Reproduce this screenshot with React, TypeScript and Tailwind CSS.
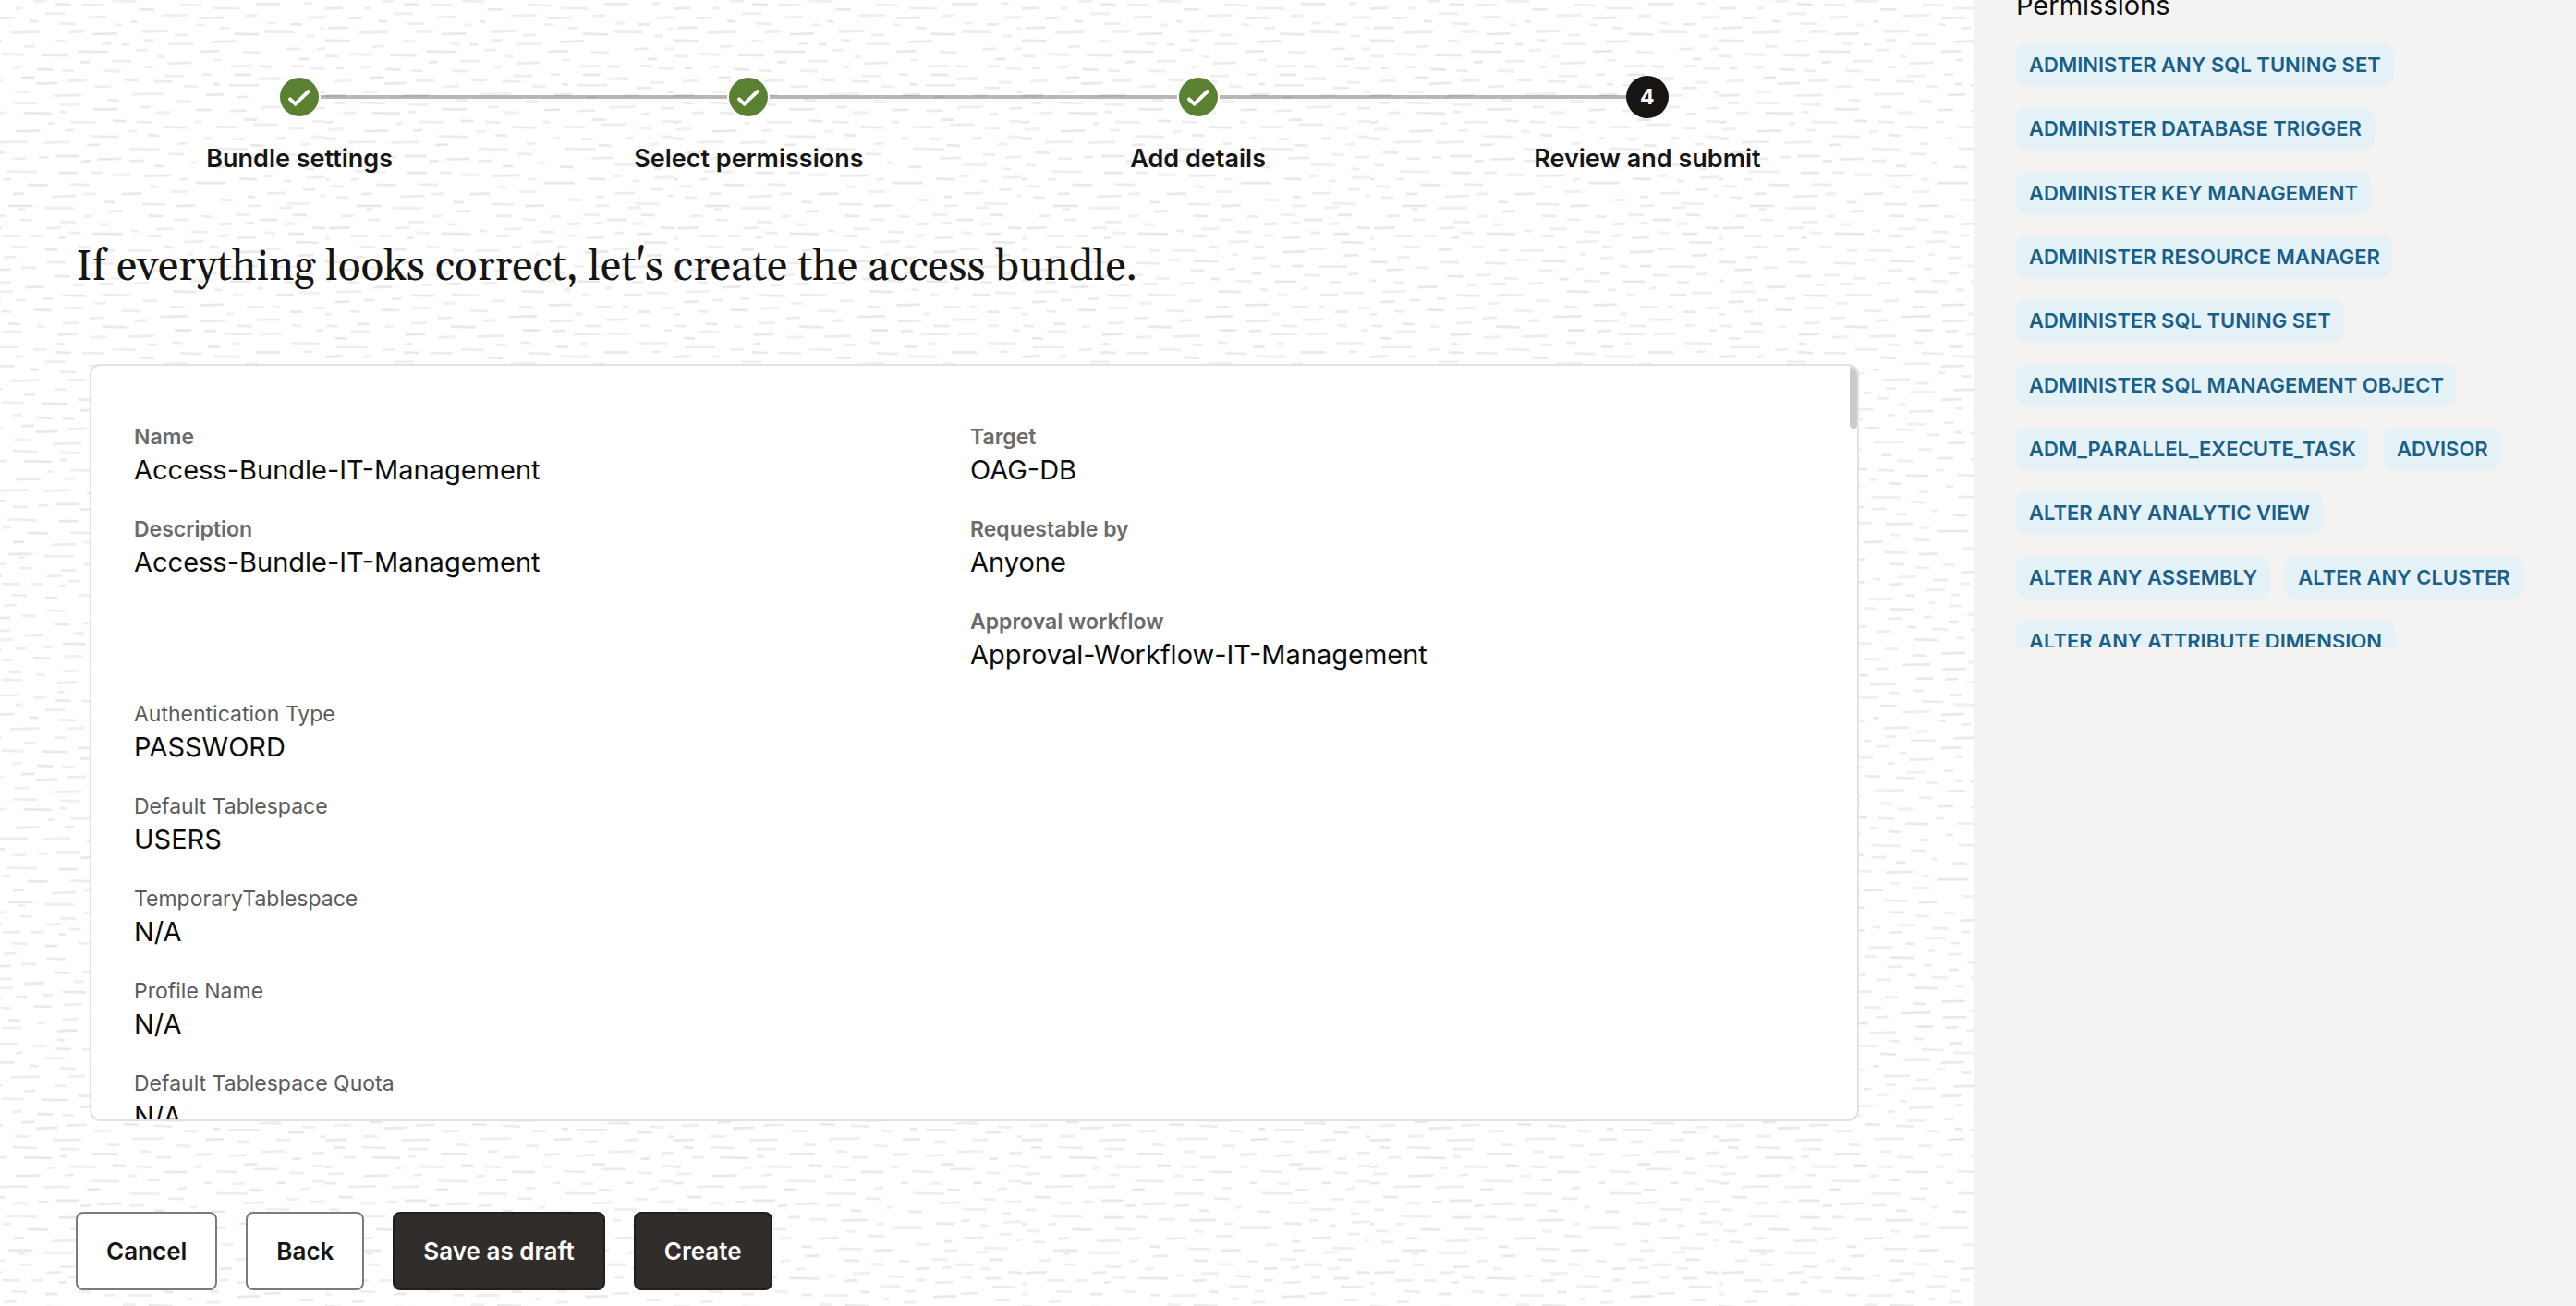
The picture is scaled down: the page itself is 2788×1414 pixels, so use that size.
import React from 'react';

const STEPS = [
  { label: 'Bundle settings', done: true },
  { label: 'Select permissions', done: true },
  { label: 'Add details', done: true },
  { label: 'Review and submit', done: false },
];

const FIELDS = [
  { label: 'Name', value: 'Access-Bundle-IT-Management', strong: true, column: 1 },
  { label: 'Target', value: 'OAG-DB', strong: true, column: 2 },
  { label: 'Description', value: 'Access-Bundle-IT-Management', strong: true, column: 1 },
  { label: 'Requestable by', value: 'Anyone', strong: true, column: 2 },
  { label: 'Approval workflow', value: 'Approval-Workflow-IT-Management', strong: true, column: 2 },
  { label: 'Authentication Type', value: 'PASSWORD', strong: false, column: 1 },
  { label: 'Default Tablespace', value: 'USERS', strong: false, column: 1 },
  { label: 'TemporaryTablespace', value: 'N/A', strong: false, column: 1 },
  { label: 'Profile Name', value: 'N/A', strong: false, column: 1 },
  { label: 'Default Tablespace Quota', value: 'N/A', strong: false, column: 1 },
];

const PERMISSIONS = [
  'ADMINISTER ANY SQL TUNING SET',
  'ADMINISTER DATABASE TRIGGER',
  'ADMINISTER KEY MANAGEMENT',
  'ADMINISTER RESOURCE MANAGER',
  'ADMINISTER SQL TUNING SET',
  'ADMINISTER SQL MANAGEMENT OBJECT',
  'ADM_PARALLEL_EXECUTE_TASK',
  'ADVISOR',
  'ALTER ANY ANALYTIC VIEW',
  'ALTER ANY ASSEMBLY',
  'ALTER ANY CLUSTER',
  'ALTER ANY ATTRIBUTE DIMENSION',
];

// Strokes of the paper texture, each "x1 x2 y" inside one 1132-unit tile.
const STROKES = `24 80 27;150 172 27;208 252 4;280 330 14;365 438 16;465 542 4;550 600 31;685 755 17;788 880 27;930 1010 13;1087 1113 11;
245 310 44;100 146 58;388 444 56;625 712 50;747 825 58;896 936 51;1100 1156 57;198 224 69;292 346 77;474 498 81;525 545 70;737 762 80;968 996 75;1042 1080 79;812 846 91;1139 1155 93;35 100 90;133 227 105;320 376 103;401 480 110;560 645 102;666 708 114;862 942 111;960 1055 104;1092 1122 117;24 104 132;276 314 134;427 461 142;495 520 145;568 598 131;648 728 143;788 866 135;176 214 151;540 580 163;747 812 167;1028 1074 159;1128 1156 159;352 452 168;888 946 170;104 178 177;234 320 180;24 68 183;610 635 184;1070 1102 192;794 820 196;463 526 199;360 390 202;643 722 205;140 172 218;60 85 221;572 598 218;850 917 215;940 980 216;1048 1086 215;1104 1156 223;220 271 226;302 340 230;436 492 231;860 916 243;756 788 242;635 697 247;168 210 252;940 1010 255;
50 108 263;216 287 271;318 380 262;404 460 281;502 548 260;600 660 265;697 742 281;792 814 274;956 1012 256;1080 1124 268;1036 1086 286;843 940 277;146 195 298;24 92 310;272 363 310;528 628 306;768 826 308;870 908 315;997 1044 310;1140 1156 299;447 486 326;674 719 329;54 88 335;142 221 335;294 358 340;401 482 355;553 586 348;605 655 366;735 786 357;844 900 360;946 1030 348;1050 1078 371;1115 1156 352;82 123 367;176 268 368;293 318 364;327 410 397;465 507 393;543 594 397;731 756 397;892 935 389;922 1002 405;1115 1156 395;24 50 397;254 274 401;34 82 420;150 230 426;310 340 424;514 545 427;632 706 414;800 869 413;1038 1086 417;578 616 440;391 486 444;1113 1156 445;24 58 451;763 787 450;856 894 452;998 1026 450;99 190 462;238 327 463;382 424 471;677 707 467;1077 1107 469;912 954 473;802 904 484;520 616 485;66 115 496;648 698 501;1030 1070 503;282 354 507;224 257 511;141 187 516;416 494 517;890 958 514;1104 1156 511;362 392 524;520 568 523;717 739 529;600 634 540;36 70 537;963 1042 536;787 831 543;1093 1120 549;
122 220 558;290 352 562;395 435 561;466 522 568;567 655 571;959 987 572;1095 1156 577;24 38 583;107 134 583;682 708 583;877 934 582;1022 1046 588;41 85 606;188 254 601;327 391 600;583 614 607;734 834 595;1082 1122 616;655 711 623;141 178 630;268 347 638;370 409 630;494 559 630;966 1030 628;1139 1156 636;903 929 640;60 99 642;815 857 650;440 473 657;561 638 664;1031 1109 662;126 206 669;156 180 680;242 340 676;674 735 669;903 948 669;1005 1050 675;452 497 687;77 118 702;373 403 703;581 628 702;755 791 704;863 914 698;1050 1096 699;162 202 715;664 709 714;941 1000 715;295 347 722;424 454 730;810 854 728;897 926 725;1020 1056 728;36 104 741;250 299 741;607 664 744;1113 1156 741;525 550 751;320 362 757;401 497 760;719 770 754;960 994 757;1037 1087 760;106 164 767;200 239 767;580 623 767;811 843 766;24 38 776;291 312 773;872 931 773;695 761 786;1060 1134 788;136 187 803;352 394 803;632 662 804;779 809 802;24 43 811;246 286 811;440 474 814;512 590 815;868 944 819;957 1013 809;706 727 827;1068 1118 830;112 152 836;771 815 838;24 80 852;249 312 853;497 540 846;582 660 849;397 469 856;832 864 866;901 937 865;988 1080 867;169 216 870;76 133 877;572 618 879;691 718 874;771 804 889;1084 1117 891;367 416 894;274 325 898;942 992 895;458 506 905;638 668 907;24 42 912;717 771 914;845 916 915;1022 1060 917;100 136 918;418 466 923;536 584 921;338 372 927;180 242 933;934 953 937;62 142 948;662 735 948;797 822 942;1068 1136 952;303 378 961;436 522 959;857 886 959;996 1052 959;240 272 971;563 610 978;57 103 981;151 185 976;406 444 986;750 826 991;1118 1156 1001;305 368 1002;654 700 999;902 959 998;988 1010 997;208 265 1008;103 136 1013;494 554 1011;1042 1082 1014;24 45 1022;835 860 1021;620 712 1029;389 436 1034;932 1008 1039;752 830 1043;536 576 1042;302 353 1050;128 167 1053;28 64 1060;219 247 1062;433 511 1063;868 920 1060;1048 1080 1059;666 721 1074;1126 1150 1074;106 172 1078;762 802 1076;828 920 1086;945 1016 1085;285 350 1087;516 600 1093;392 447 1096;57 93 1100;660 692 1114;1045 1137 1116;286 308 1118;578 612 1121;852 876 1117;774 813 1127;60 160 1129`
  .split(';')
  .map((entry) => entry.trim().split(' ').map(Number));

const TILTS = [-1, 1, 1, 0, -1];

function strokePath(start: number) {
  return STROKES.filter((_, i) => i % 3 === start)
    .map(([x1, x2, y], i) => {
      const tilt = TILTS[i % TILTS.length];
      return `M${x1} ${y - tilt}L${x2} ${y + tilt}`;
    })
    .join('');
}

function Texture() {
  return (
    <svg aria-hidden="true" className="absolute inset-0 -z-10 h-full w-full">
      <defs>
        <pattern id="paper" x="352" y="0" width="377" height="377" patternUnits="userSpaceOnUse" viewBox="24 0 1132 1132">
          <g fill="none" strokeWidth="8">
            <path d={strokePath(0)} stroke="#e9e9e9" />
            <path d={strokePath(1)} stroke="#ededed" />
            <path d={strokePath(2)} stroke="#f0f0f0" strokeWidth="9" />
          </g>
        </pattern>
      </defs>
      <rect width="100%" height="100%" fill="url(#paper)" />
    </svg>
  );
}

function StepMarker({ done, number }: { done: boolean; number: number }) {
  if (!done) {
    return (
      <span className="flex size-[46px] shrink-0 items-center justify-center rounded-full bg-[#161513] text-[23px] leading-[28px] font-bold text-white">
        {number}
      </span>
    );
  }
  return (
    <span className="size-[46px] shrink-0 rounded-full border-2 border-white bg-[#5a8132]">
      <svg viewBox="-21 -21 42 42" className="size-full" role="img" aria-label="Completed">
        <path d="M-10 2.4L-4.4 7.6L9.8 -6" fill="none" stroke="#fff" strokeWidth="4" strokeLinecap="round" />
      </svg>
    </span>
  );
}

function Stepper() {
  return (
    <ol className="mr-[110px] ml-[81px] flex">
      {STEPS.map((step, i) => (
        <li key={step.label} className="flex flex-1 flex-col items-center gap-7">
          <div className="flex w-full items-center">
            <span className={i === 0 ? 'h-1 flex-1' : 'h-1 flex-1 bg-[#161513]/30'} />
            <StepMarker done={step.done} number={i + 1} />
            <span className={i === STEPS.length - 1 ? 'h-1 flex-1' : 'h-1 flex-1 bg-[#161513]/30'} />
          </div>
          <span className="text-[27px] leading-[32px] font-semibold">{step.label}</span>
        </li>
      ))}
    </ol>
  );
}

function Summary() {
  return (
    <section className="relative mr-[124px] ml-[97px] h-[820px] overflow-hidden rounded-xl border-2 border-[#e2e2e2] bg-white">
      <dl className="grid grid-cols-2 gap-y-7 pt-[61px] pr-[55px] pl-[46px]">
        {FIELDS.map((field) => (
          <div key={field.label} className={field.column === 1 ? 'col-start-1' : 'col-start-2'}>
            <dt
              className={
                field.strong
                  ? 'text-[23px] leading-[32px] font-semibold text-[#6b6a69]'
                  : 'text-[23px] leading-[32px] text-[#5c5b5a]'
              }
            >
              {field.label}
            </dt>
            <dd className="text-[29px] leading-[40px] text-[#0c0c0c]">{field.value}</dd>
          </div>
        ))}
      </dl>
      <span className="absolute top-0 right-0 h-[68px] w-2 rounded-full bg-[#cbcbcb]" />
    </section>
  );
}

const BUTTON = 'h-[85px] rounded-lg border-2 px-[31px] text-[26px] leading-[32px] font-semibold';
const OUTLINED = `${BUTTON} border-[#7d7b79] bg-white text-[#161513]`;
const SOLID = `${BUTTON} border-[#211e1c] bg-[#312d2a] text-white`;

export default function App() {
  return (
    <div className="flex h-screen overflow-hidden bg-white font-['Inter','Liberation_Sans',sans-serif] text-[#161513]">
      <main className="relative isolate flex-1 pt-[82px]">
        <Texture />
        <Stepper />
        <h1 className="mt-[72px] ml-[82px] font-['Georgia','Gelasio','Liberation_Serif',serif] text-[46px] leading-[60px]">
          If everything looks correct, let's create the access bundle.
        </h1>
        <div className="mt-[74px]">
          <Summary />
        </div>
        <div className="mt-[98px] ml-[82px] flex gap-[31px]">
          <button type="button" className={OUTLINED}>Cancel</button>
          <button type="button" className={OUTLINED}>Back</button>
          <button type="button" className={SOLID}>Save as draft</button>
          <button type="button" className={SOLID}>Create</button>
        </div>
      </main>
      <aside className="w-[652px] shrink-0 bg-[#f5f3f2] pr-[44px] pl-[46px]">
        <h2 className="-mt-[14px] text-[29px] leading-[40px] text-[#0c0c0c]">Permissions</h2>
        <div className="mt-[21px] h-[654px] overflow-hidden">
          <ul className="flex h-[670px] flex-wrap content-between gap-x-4">
            {PERMISSIONS.map((name) => (
              <li
                key={name}
                className="h-[46px] rounded-xl bg-[#e4f1f7] px-[14px] text-[22px] leading-[46px] font-semibold whitespace-nowrap text-[#1a5f88]"
              >
                {name}
              </li>
            ))}
          </ul>
        </div>
      </aside>
    </div>
  );
}
